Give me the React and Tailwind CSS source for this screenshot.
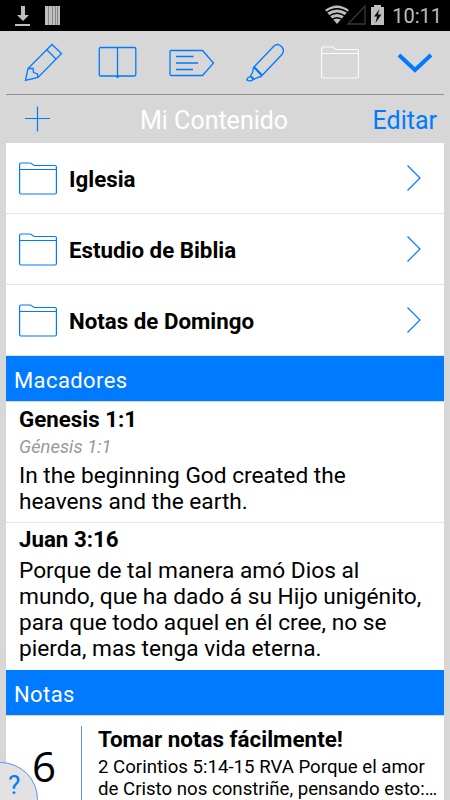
const carpetas = ["Iglesia", "Estudio de Biblia", "Notas de Domingo"];

const marcadores = [
  {
    titulo: "Genesis 1:1",
    subtitulo: "Génesis 1:1",
    lineas: ["In the beginning God created the", "heavens and the earth."],
  },
  {
    titulo: "Juan 3:16",
    lineas: [
      "Porque de tal manera amó Dios al",
      "mundo, que ha dado á su Hijo unigénito,",
      "para que todo aquel en él cree, no se",
      "pierda, mas tenga vida eterna.",
    ],
  },
];

function Carpeta({ className }) {
  return (
    <svg className={className} width="38" height="33" viewBox="0 0 38 33" fill="none" stroke="currentColor" strokeWidth="1.2">
      <path d="M2 1 H11 C13 1 13.5 3.500 16 3.500 H36 Q37.400 3.500 37.400 5 V30.500 Q37.400 32 36 32 H2 Q.6 32 .6 30.500 V2.500 Q.6 1 2 1 Z M.6 7.500 H37.400" />
    </svg>
  );
}

// Barra de estado de Android
function BarraEstado() {
  return (
    <div className="flex h-[31px] shrink-0 items-start bg-black pl-[15px] pr-2 text-[#bebebe]">
      <svg width="46" height="31" viewBox="0 0 46 31" fill="currentColor">
        <path d="M6 6h4v9h4l-6 6-6-6h4zM0 24h15v2H0z" />
        <path d="M30 6h15v19H30z" />
        <path d="M33.500 6v19M37.500 6v19M40.500 6v19M42.500 6v19" stroke="#777" strokeWidth=".8" />
      </svg>
      <svg className="ml-auto" width="60" height="31" viewBox="0 0 60 31" fill="currentColor">
        <path d="M12 24 L0 10 Q12 1 24 10 Z" />
        <path d="M1 12.500 Q12 5 23 12.500 M4 16 Q12 10.500 20 16 M7 19.500 Q12 16 17 19.500" fill="none" stroke="#000" strokeWidth="1.300" />
        <path d="M23 24 H40 V6 Z" fill="none" stroke="#383838" strokeWidth="1.300" />
        <path d="M46 7h3V5h7v2h3v18H46z" />
        <path d="M54.500 9 L49 16.500 H52 L50.500 23 L56.500 14.500 H53 Z" fill="#111" />
      </svg>
      <span className="ml-[7px] text-[20px] leading-[33px]">10:11</span>
    </div>
  );
}

function Herramientas() {
  return (
    <div className="mx-[6px] flex h-16 shrink-0 items-center border-b border-[#929292] text-[#007aff]">
      <svg className="ml-[18px]" width="40" height="40" viewBox="0 0 40 40" fill="none" stroke="currentColor" strokeWidth="1.300">
        <path d="M1.500 37.500 L4 25.500 L28 1.500 L37.500 10.500 L14 34.500 Z M4 25.500 H9 L9.500 29.500 L13.500 31 L14 34.500 M23 7 L32 16" />
      </svg>
      <svg className="ml-[34px]" width="40" height="34" viewBox="0 0 40 34" fill="none" stroke="currentColor" strokeWidth="1.300">
        <path d="M2.500 1.500 H36.500 Q37.800 1.500 37.800 3 V28.500 Q37.800 30 36.500 30 H2.500 Q1.300 30 1.300 28.500 V3 Q1.300 1.500 2.500 1.500 Z M19.500 1.500 V32" />
        <path d="M17.500 30h4l-2 2.500z" fill="currentColor" stroke="none" />
      </svg>
      <svg className="ml-[30px]" width="47" height="28" viewBox="0 0 47 28" fill="none" stroke="currentColor" strokeWidth="1.300">
        <path d="M3 1.500 H34.500 L45.500 14 L34.500 26.500 H3 Q2 26.500 2 25 V3 Q2 1.500 3 1.500 Z" />
        <path d="M8 7.500H25.500M8 14H30M8 20.500H25" />
      </svg>
      <svg className="ml-[31px]" width="40" height="40" viewBox="0 0 40 40" fill="none" stroke="currentColor" strokeWidth="1.300">
        <path d="M8 24 L28 3 Q32 -.5 36 4 Q39 8 35.500 12 L16 32.500 Z M7.500 24 Q7.500 29 4.500 33 L8.500 36 Q12 34 15.500 33.500" />
        <path d="M8 24 L16 32.500" strokeWidth="2.200" />
        <path d="M4.500 33.500 Q1 34.500 .8 37 Q4 39 7.500 36.500 Z" />
      </svg>
      <Carpeta className="ml-[35px] text-[#fafafa]" />
      <svg className="ml-[38px]" width="36" height="22" viewBox="0 0 36 22" fill="none" stroke="currentColor" strokeWidth="4">
        <path d="M2 3 L18 18 L34 3" />
      </svg>
    </div>
  );
}

function Seccion({ titulo }) {
  return (
    <div className="h-[46px] border-b border-[#d4d8e0] bg-[#007aff] pl-2 text-[22px] leading-[49px] tracking-[0.4px] text-white">
      {titulo}
    </div>
  );
}

function App() {
  return (
    <div className="relative flex h-[800px] w-[450px] flex-col overflow-hidden bg-[#d7d7d7] font-['Roboto','Liberation_Sans',sans-serif] text-black whitespace-nowrap">
      <BarraEstado />
      <Herramientas />

      <div className="mx-[6px] flex h-12 shrink-0 items-center pl-[19px] pr-[7px] text-[25px]">
        <svg className="text-[#007aff]" width="26" height="26" viewBox="0 0 26 26" stroke="currentColor" strokeWidth="1.200">
          <path d="M12.500 0.500V25.500M0 12.500H25" />
        </svg>
        <span className="ml-[89px] pt-[3px] text-white">Mi Contenido</span>
        <span className="ml-auto pt-[3px] text-[#007aff]">Editar</span>
      </div>

      <div className="mx-[6px] flex-1 bg-white">
        {carpetas.map((nombre) => (
          <div key={nombre} className="flex h-[71px] items-center border-b border-[#e3e3e0] pl-[13px] pr-[23px]">
            <Carpeta className="text-[#007aff]" />
            <span className="ml-3 pt-[3px] text-[22.300px] font-bold">{nombre}</span>
            <svg className="ml-auto text-[#007aff]" width="14" height="26" viewBox="0 0 14 26" fill="none" stroke="currentColor" strokeWidth="1.200">
              <path d="M.5 .5 L13 13 L.5 25.500" />
            </svg>
          </div>
        ))}

        <Seccion titulo="Macadores" />
        {marcadores.map((m, i) => (
          <div key={m.titulo} className={i === 0 ? "h-[121px] border-b border-[#e3e3e0] px-[13px] pt-1" : "h-[147px] px-[13px] pt-[3px]"}>
            <p className="text-[22.300px] leading-[26px] font-bold">{m.titulo}</p>
            {m.subtitulo && <p className="text-[18.400px] leading-[29px] text-[#999] italic">{m.subtitulo}</p>}
            <div className={m.subtitulo ? "pt-[2px] text-[22.700px] leading-[26px]" : "pt-[6px] text-[22.700px] leading-[26px]"}>
              {m.lineas.map((linea) => (
                <p key={linea}>{linea}</p>
              ))}
            </div>
          </div>
        ))}

        <Seccion titulo="Notas" />
        <div className="flex h-[84px]">
          <span className="ml-[26px] w-[49px] pt-[23px] font-['Open_Sans','Noto_Sans',sans-serif] text-[42px] leading-[54px]">6</span>
          <div className="mt-[10px] border-l border-[#5f91f5] pl-4">
            <p className="text-[22.400px] leading-[26px] font-bold">Tomar notas fácilmente!</p>
            <p className="mt-[4px] text-[18.650px] leading-[22px]">2 Corintios 5:14-15 RVA Porque el amor</p>
            <p className="text-[18.650px] leading-[22px]">de Cristo nos constriñe, pensando esto:…</p>
          </div>
        </div>
      </div>

      {/* Botón de ayuda en la esquina */}
      <button className="absolute -bottom-[37px] -left-[37px] size-[75px] rounded-full border border-[#4a94f5] bg-[#e2e2e2]">
        <span className="absolute top-[6px] left-[44px] text-[26px] leading-8 text-[#007aff]">?</span>
      </button>
    </div>
  );
}

export default App;
